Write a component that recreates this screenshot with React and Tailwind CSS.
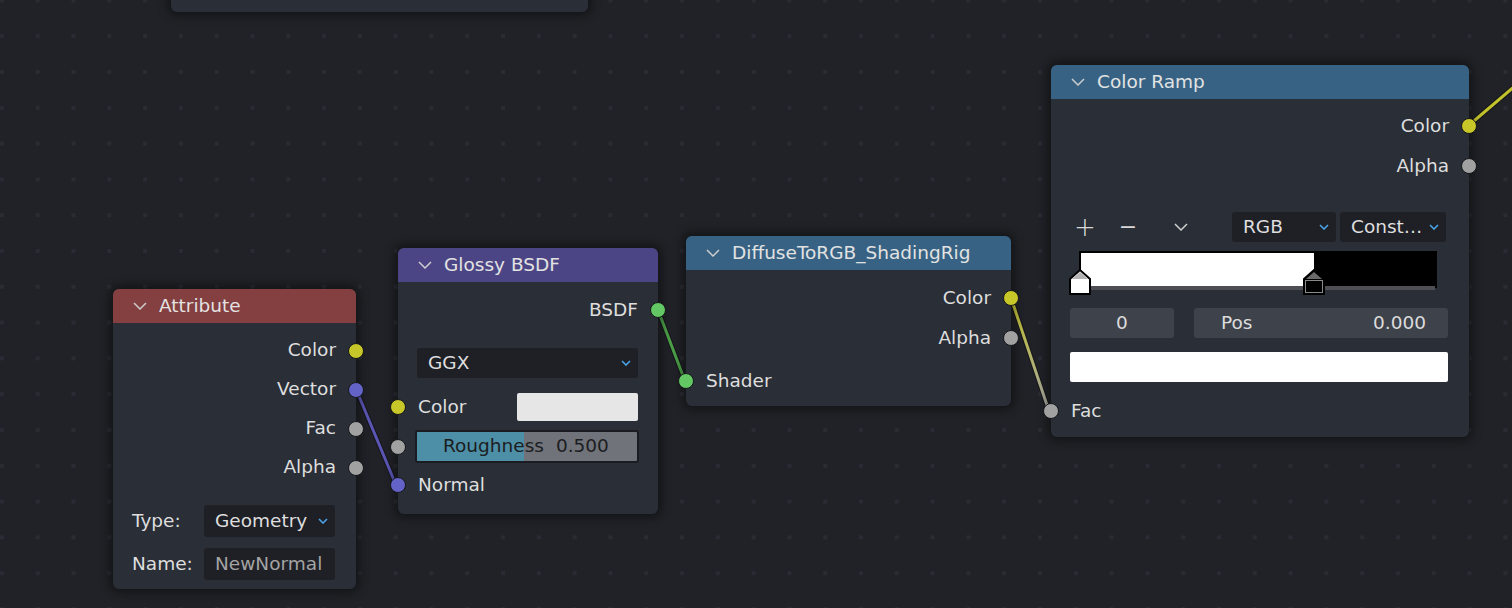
import React from "react";

const socketColors = {
  yellow: "bg-[#c7c729]",
  purple: "bg-[#6363c7]",
  gray: "bg-[#a1a1a1]",
  green: "bg-[#63c763]",
};

function Socket({ color, side }) {
  return (
    <span
      className={
        "absolute top-1/2 -translate-y-1/2 w-[16px] h-[16px] rounded-full border border-[#15161a] " +
        socketColors[color] +
        (side === "right" ? " right-[-8px]" : " left-[-8px]")
      }
    />
  );
}

function Chevron({ className }) {
  return (
    <svg width="14" height="8" viewBox="0 0 14 8" className={className}>
      <polyline points="1,1 7,7 13,1" fill="none" stroke="currentColor" strokeWidth="1.5" />
    </svg>
  );
}

function SmallChevron() {
  return (
    <svg width="10" height="6" viewBox="0 0 10 6" className="text-[#4aa3e6]">
      <polyline points="1,1 5,5 9,1" fill="none" stroke="currentColor" strokeWidth="1.6" />
    </svg>
  );
}

function Header({ title, color }) {
  return (
    <div className={"h-[34px] flex items-center gap-3 pl-5 rounded-t-[6px] text-[#e2e2e2] " + color}>
      <Chevron className="text-[#cccccc]" />
      <span>{title}</span>
    </div>
  );
}

function OutRow({ label, color, h = "h-[39px]" }) {
  return (
    <div className={"relative flex items-center justify-end pr-5 " + h}>
      <span>{label}</span>
      <Socket color={color} side="right" />
    </div>
  );
}

function InRow({ label, color, h = "h-[40px]", className = "" }) {
  return (
    <div className={"relative flex items-center pl-5 " + h + " " + className}>
      <span>{label}</span>
      <Socket color={color} side="left" />
    </div>
  );
}

function Dropdown({ text, className }) {
  return (
    <div className={"flex items-center justify-between bg-[#1e2026] rounded-[3px] pl-[11px] pr-[7px] " + className}>
      <span>{text}</span>
      <SmallChevron />
    </div>
  );
}

const nodeBase =
  "absolute rounded-[6px] bg-[#2a2e37] shadow-[0_0_10px_4px_rgba(0,0,0,0.4)] text-[#dedede]";

function RampMarker({ fill, top, inner }) {
  return (
    <svg width="24" height="28" viewBox="0 0 24 28">
      <polygon points="2,11 12,2 22,11 22,26 2,26" fill={fill} stroke="#000" strokeWidth="2" />
      <polygon points="4,11 12,4 20,11" fill={top} />
      <rect x="3.5" y="12.5" width="17" height="12" fill="none" stroke={inner} strokeWidth="1" />
    </svg>
  );
}

export default function App() {
  return (
    <div className="relative w-[1512px] h-[608px] overflow-hidden bg-[#202227] bg-[radial-gradient(circle,#292c34_2px,transparent_2.5px)] bg-size-[35.8px_35.8px] bg-position-[-16px_-17.5px] font-['DejaVu_Sans',sans-serif] text-[18.5px] leading-none">
      {/* wires */}
      <svg className="absolute inset-0 pointer-events-none" width="1512" height="608">
        <defs>
          <linearGradient id="yg" x1="1011" y1="298" x2="1049" y2="411" gradientUnits="userSpaceOnUse">
            <stop offset="0" stopColor="#c2c22c" />
            <stop offset="1" stopColor="#a5a5a5" />
          </linearGradient>
        </defs>
        <line x1="356" y1="389" x2="396" y2="485" stroke="#15161a" strokeWidth="5" />
        <line x1="356" y1="389" x2="396" y2="485" stroke="#5b56b4" strokeWidth="3" />
        <line x1="658" y1="310" x2="685" y2="381" stroke="#15161a" strokeWidth="5" />
        <line x1="658" y1="310" x2="685" y2="381" stroke="#4c9f48" strokeWidth="3" />
        <line x1="1011" y1="298" x2="1049" y2="411" stroke="#15161a" strokeWidth="5" />
        <line x1="1011" y1="298" x2="1049" y2="411" stroke="url(#yg)" strokeWidth="3" />
        <line x1="1468" y1="126" x2="1522" y2="80" stroke="#15161a" strokeWidth="5" />
        <line x1="1468" y1="126" x2="1522" y2="80" stroke="#c2c22c" strokeWidth="3" />
      </svg>

      {/* top partial node */}
      <div className={nodeBase + " left-[171px] top-[-100px] w-[417px] h-[112px]"} />

      {/* Attribute */}
      <div className={nodeBase + " left-[113px] top-[289px] w-[243px] h-[300px]"}>
        <Header title="Attribute" color="bg-[#843f40]" />
        <div className="pt-[8px]">
          <OutRow label="Color" color="yellow" />
          <OutRow label="Vector" color="purple" />
          <OutRow label="Fac" color="gray" />
          <OutRow label="Alpha" color="gray" />
        </div>
        <div className="mt-[18px] flex items-center pl-[19px] pr-5 h-[32px]">
          <span className="w-[72px]">Type:</span>
          <Dropdown text="Geometry" className="w-[131px] h-[32px]" />
        </div>
        <div className="mt-[11px] flex items-center pl-[19px] pr-5 h-[32px]">
          <span className="w-[72px]">Name:</span>
          <div className="w-[131px] h-[32px] flex items-center bg-[#1e2026] rounded-[3px] pl-[11px] text-[#a3a3a3]">
            NewNormal
          </div>
        </div>
      </div>

      {/* Glossy BSDF */}
      <div className={nodeBase + " left-[398px] top-[248px] w-[260px] h-[266px]"}>
        <Header title="Glossy BSDF" color="bg-[#4c4585]" />
        <div className="pt-[8px]">
          <OutRow label="BSDF" color="green" h="h-[40px]" />
        </div>
        <div className="mt-[18px] pl-[19px] pr-5">
          <Dropdown text="GGX" className="h-[30px] w-full" />
        </div>
        <div className="relative mt-[14px] h-[30px] flex items-center pl-5 pr-5">
          <span className="flex-1">Color</span>
          <div className="w-[121px] h-[28px] bg-[#e6e6e6] rounded-[2px]" />
          <Socket color="yellow" side="left" />
        </div>
        <div className="relative mt-[8px] h-[33px] pl-[17px] pr-[19px]">
          <div className="h-full rounded-[3px] border-2 border-[#1a1c21] bg-[#70737a] overflow-hidden relative flex items-center text-[#1c1d21]">
            <div className="absolute left-0 top-0 bottom-0 w-[107px] bg-[#4c8fa6]" />
            <span className="relative ml-[26px]">Roughness</span>
            <span className="relative ml-[12px]">0.500</span>
          </div>
          <Socket color="gray" side="left" />
        </div>
        <InRow label="Normal" color="purple" h="h-[36px]" className="mt-[4px]" />
      </div>

      {/* DiffuseToRGB_ShadingRig */}
      <div className={nodeBase + " left-[686px] top-[236px] w-[325px] h-[170px]"}>
        <Header title="DiffuseToRGB_ShadingRig" color="bg-[#376284]" />
        <div className="pt-[8px]">
          <OutRow label="Color" color="yellow" h="h-[40px]" />
          <OutRow label="Alpha" color="gray" h="h-[40px]" />
        </div>
        <InRow label="Shader" color="green" className="mt-[3px]" />
      </div>

      {/* Color Ramp */}
      <div className={nodeBase + " left-[1051px] top-[65px] w-[418px] h-[372px]"}>
        <Header title="Color Ramp" color="bg-[#376284]" />
        <div className="pt-[7px]">
          <OutRow label="Color" color="yellow" h="h-[40px]" />
          <OutRow label="Alpha" color="gray" h="h-[40px]" />
        </div>
        <div className="mt-[26px] h-[30px] flex items-center pl-[19px] pr-[21px]">
          <span className="w-[30px] text-center text-[26px] font-light text-[#d8d8d8]">+</span>
          <span className="ml-[13px] w-[30px] text-center text-[22px] text-[#d8d8d8]">−</span>
          <span className="ml-[23px] w-[30px] flex justify-center">
            <Chevron className="text-[#cfcfcf]" />
          </span>
          <Dropdown text="RGB" className="ml-[36px] w-[104px] h-[30px]" />
          <Dropdown text="Const…" className="ml-[4px] w-[106px] h-[30px]" />
        </div>
        <div className="relative mt-[9px] ml-[28px] w-[358px] h-[40px]">
          <div className="absolute inset-x-0 top-0 h-[37px] border-2 border-black flex">
            <div className="w-[233px] bg-white" />
            <div className="flex-1 bg-black" />
          </div>
          <div className="absolute left-[2px] right-[2px] top-[35px] h-[4px] bg-[#4d4f55]" />
          <div className="absolute left-[-11px] top-[17px]">
            <RampMarker fill="#ffffff" top="#b4b4b4" inner="#ffffff" />
          </div>
          <div className="absolute left-[223px] top-[17px]">
            <RampMarker fill="#000000" top="#6a6a6a" inner="#8a8a8a" />
          </div>
        </div>
        <div className="mt-[17px] flex pl-[19px] pr-[21px] gap-[20px] text-[#dcdcdc]">
          <div className="w-[104px] h-[30px] rounded-[3px] bg-[#3e424b] flex items-center justify-center">0</div>
          <div className="flex-1 h-[30px] rounded-[3px] bg-[#3e424b] flex items-center justify-between pl-[27px] pr-[22px]">
            <span>Pos</span>
            <span>0.000</span>
          </div>
        </div>
        <div className="mt-[14px] ml-[19px] mr-[21px] h-[30px] bg-white rounded-[2px]" />
        <InRow label="Fac" color="gray" className="mt-[9px]" />
      </div>
    </div>
  );
}
